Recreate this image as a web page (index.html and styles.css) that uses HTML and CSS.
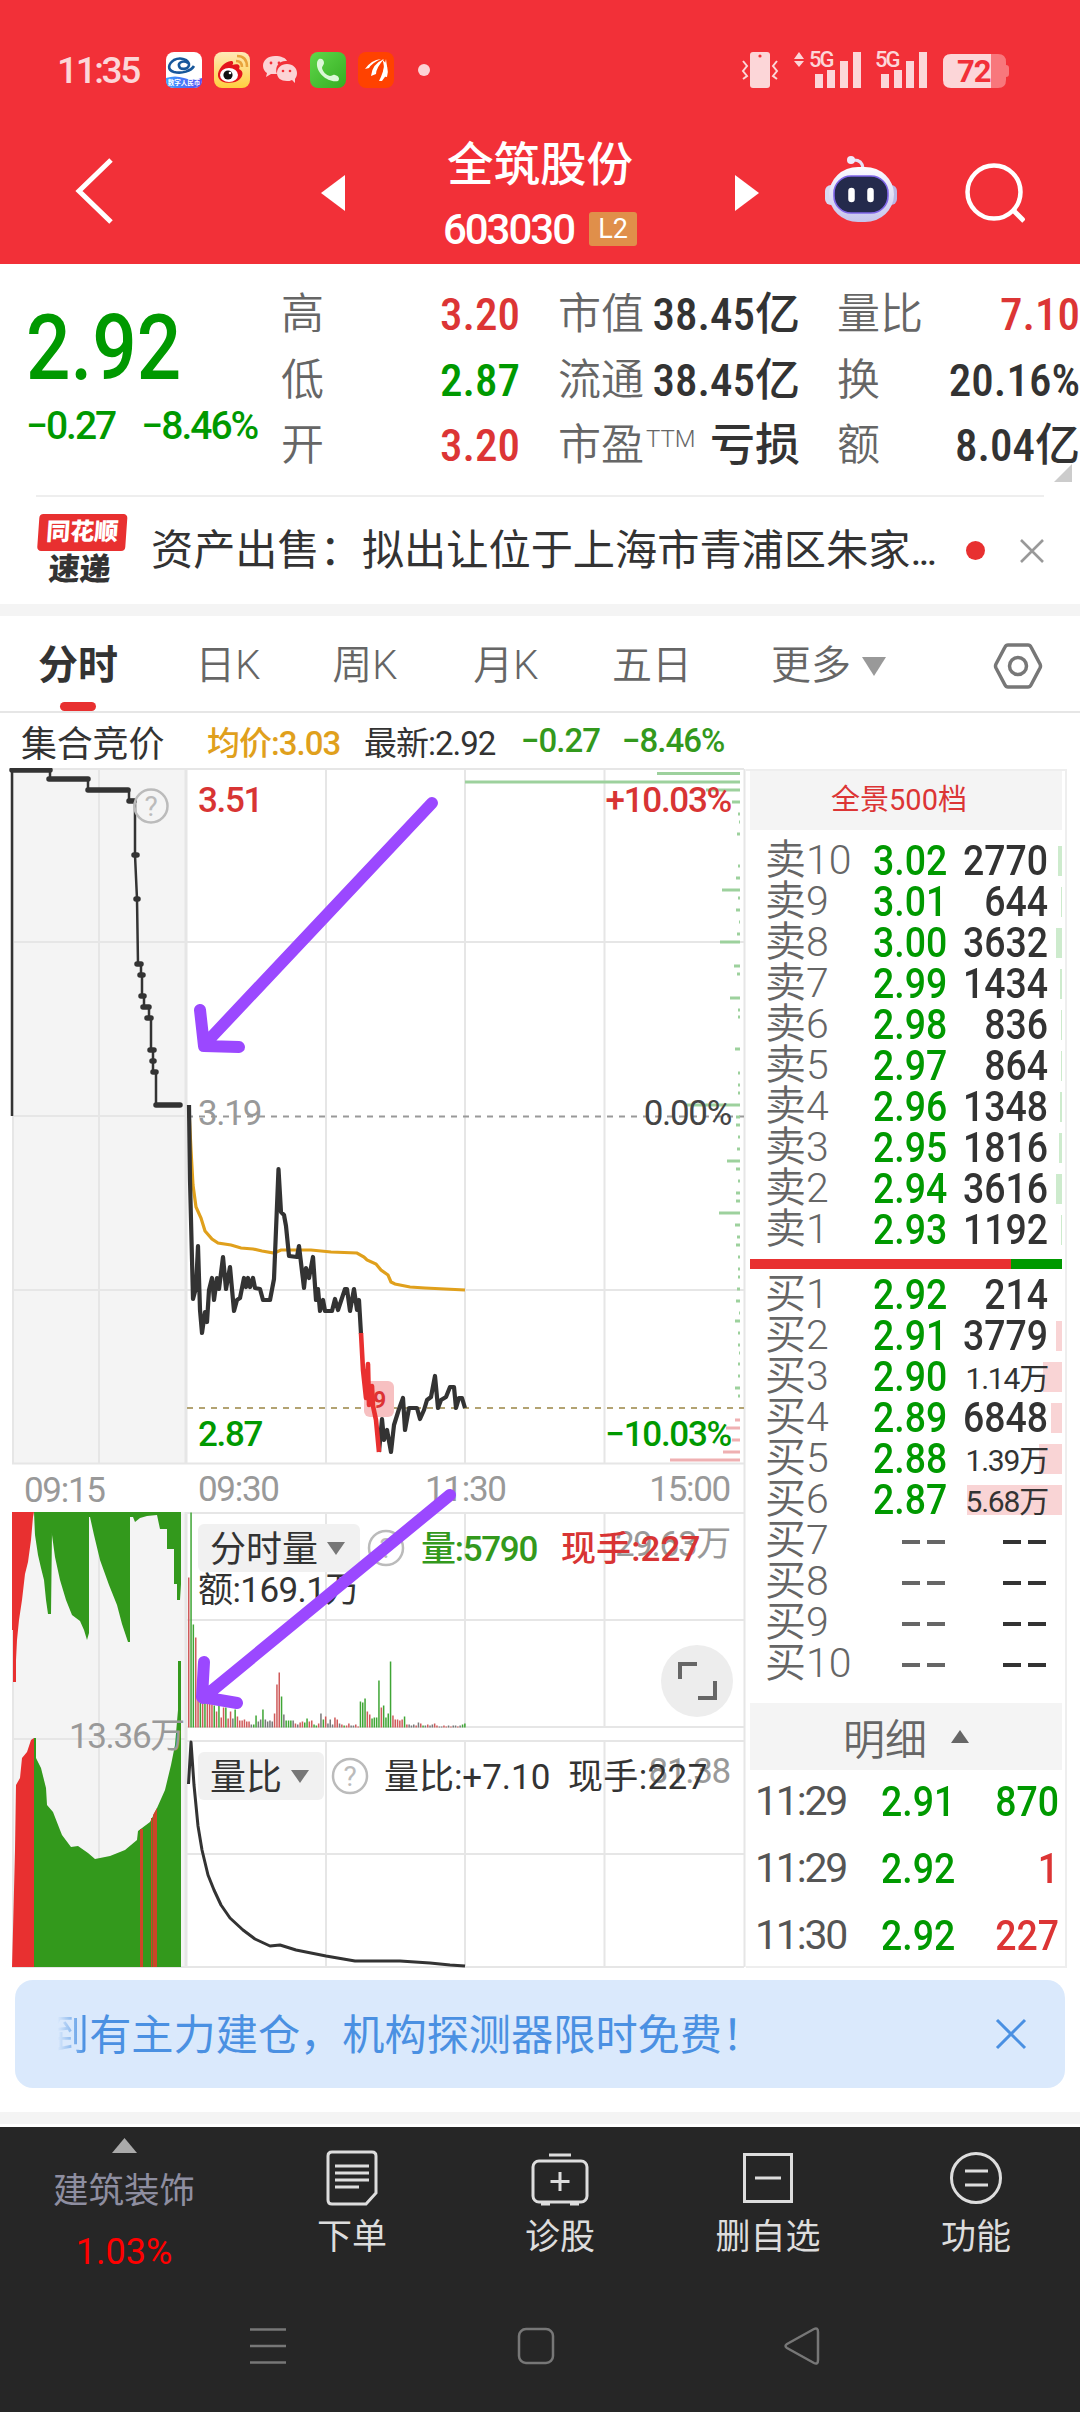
FILE: index.html
```html
<!DOCTYPE html>
<html lang="zh-CN">
<head>
  <meta charset="UTF-8" />
  <meta name="viewport" content="width=device-width, initial-scale=1.0"/>
  <title>全筑股份 603030</title>
  <link rel="stylesheet" href="styles.css">
</head>
<body>

  <header>
    <div class="status-bar">
      <span class="clock">11:35</span>
      <svg class="app-icons" width="266" height="38" viewBox="164 53 266 38">
        <defs>
          <linearGradient id="sea" x1="0" x2="1"><stop offset="0" stop-color="#3aa0ff"/><stop offset="1" stop-color="#5a4df0"/></linearGradient>
          <linearGradient id="sun" x1="0" y1="0" x2="0" y2="1"><stop offset="0" stop-color="#ffe9b8"/><stop offset="1" stop-color="#ffcf3f"/></linearGradient>
          <linearGradient id="leaf" x1="0" y1="0" x2="1" y2="1"><stop offset="0" stop-color="#5fd64a"/><stop offset="1" stop-color="#35ad22"/></linearGradient>
        </defs>
        <rect x="166" y="53" width="36" height="36" rx="8" fill="#fff"/>
        <path d="M166 79q9-3 18 0t18 0v2q0 8-8 8h-20q-8 0-8-8z" fill="url(#sea)"/>
        <path d="M188 64c-4-3-10-1-9 3 1 4 9 4 10-1 0-6-9-8-15-5-6 4-7 10 0 12 8 2 17-1 20-6" fill="none" stroke="#17579b" stroke-width="2.6"/>
        <text x="184" y="86" text-anchor="middle" class="bank">数字人民币</text>
        <rect x="214" y="53" width="36" height="36" rx="8" fill="url(#sun)"/>
        <path d="M218 77c-1-7 8-16 14-15 2 1 1 4 0 4 6-2 9 0 7 4 5 2 4 7 1 10-6 6-21 5-22-3z" fill="#e4141c"/>
        <ellipse cx="229" cy="76" rx="9" ry="7" fill="#fff"/>
        <circle cx="228" cy="76" r="4.6" fill="#111"/><circle cx="230" cy="74" r="1.3" fill="#fff"/>
        <path d="M236 62q6 0 6 6M237 57q10 0 10 11" fill="none" stroke="#e8a33c" stroke-width="2.5"/>
        <g fill="#fcd3d5">
          <path d="M275 57c-7 0-12 4-12 10 0 3 2 6 4 7l-1 4 5-3h6c-3-8 3-14 10-13-1-3-6-5-12-5z"/>
          <path d="M287 65c-6 0-10 4-10 9s4 8 10 8c2 0 3 0 5-1l3 3v-4c1-2 2-3 2-6 0-5-4-9-10-9z"/>
        </g>
        <g fill="#f23038"><circle cx="271" cy="64" r="1.4"/><circle cx="279" cy="64" r="1.4"/><circle cx="283" cy="72" r="1.3"/><circle cx="290" cy="72" r="1.3"/></g>
        <rect x="310" y="53" width="36" height="36" rx="8" fill="url(#leaf)"/>
        <path d="M319 60c3-1 5 1 5 4 0 2-2 3-2 5 1 4 4 7 8 8 2 0 3-2 5-1 4 1 5 4 3 6-10 2-22-8-21-18 0-2 1-3 2-4z" fill="#dcf7d8"/>
        <rect x="358" y="53" width="36" height="36" rx="8" fill="#ff4200"/>
        <g fill="#fff"><path d="M365 70q6-9 16-10-9 4-12 9zM371 77q1-12 13-17-8 9-8 15zM379 82q4-7 7-22 3 15-4 22z"/><path d="M382 60q8 7 5 18-4 0-4-4 2-8-1-14z"/></g>
        <circle cx="424" cy="71" r="6" fill="#fcd3d5"/>
      </svg>
      <svg class="phone-icons" width="270" height="62" viewBox="740 40 270 62">
        <g fill="#fcd6d8">
          <path d="M753 52h14q3 0 3 3v30q0 3-3 3h-14q-3 0-3-3v-30q0-3 3-3z"/>
          <path d="M794 59l5-7 5 7zM794 61l5 6 5-6z"/>
          <path d="M815 74h8v14h-8zM827 70h8v18h-8zM840 61h8v27h-8zM853 52h8v36h-8z"/>
          <path d="M881 74h8v14h-8zM894 70h8v18h-8zM906 61h8v27h-8zM919 52h8v36h-8z"/>
          <path d="M951 54h40v34h-40q-8 0-8-8v-18q0-8 8-8z"/>
          <text x="809" y="67" class="net">5G</text>
          <text x="875" y="67" class="net">5G</text>
        </g>
        <path d="M991 54h7q8 0 8 8v3q3 0 3 3v6q0 3-3 3v3q0 8-8 8h-7z" fill="#f8777c"/>
        <circle cx="760" cy="56" r="1.6" fill="#f23038"/>
        <path d="M743 61l4 5-4 5 4 5-4 3M777 61l-4 5 4 5-4 5 4 3" fill="none" stroke="#fcd6d8" stroke-width="2"/>
        <text x="957" y="82" class="battery">72</text>
      </svg>
    </div>

    <div class="title-bar">
      <svg class="back" width="40" height="68" viewBox="0 0 40 68"><path d="M36 3L4 34l32 31" fill="none" stroke="#fff" stroke-width="5"/></svg>
      <svg class="prev" width="24" height="36" viewBox="0 0 24 36"><path d="M24 0v36L0 18z" fill="#fff"/></svg>
      <div class="stock">
        <div class="stock-name">全筑股份</div>
        <div class="stock-code">603030<span class="badge-l2">L2</span></div>
      </div>
      <svg class="next" width="24" height="36" viewBox="0 0 24 36"><path d="M0 0v36l24-18z" fill="#fff"/></svg>
      <svg class="robot" width="74" height="70" viewBox="824 153 74 70">
        <defs>
          <linearGradient id="shell" x1="0" y1="0" x2="0" y2="1"><stop offset="0" stop-color="#fdfcff"/><stop offset="1" stop-color="#c5c4ec"/></linearGradient>
        </defs>
        <path d="M863 167q-1-9-11-8" fill="none" stroke="#e6e2f6" stroke-width="3"/>
        <circle cx="851" cy="159" r="4" fill="#efeafb"/>
        <rect x="825" y="184" width="12" height="20" rx="6" fill="#d9d9f2"/>
        <rect x="885" y="184" width="12" height="20" rx="6" fill="#b9b6e4"/>
        <rect x="829" y="166" width="65" height="55" rx="29" fill="url(#shell)"/>
        <rect x="834" y="175" width="54" height="37" rx="17" fill="#242a4c" stroke="#7f66e8" stroke-width="1.6"/>
        <path d="M851.500 190v8M870.500 190v8" stroke="#fff" stroke-width="6.5" stroke-linecap="round"/>
      </svg>
      <svg class="search" width="60" height="60" viewBox="965 161 60 60"><circle cx="994" cy="190" r="26.5" fill="none" stroke="#fff" stroke-width="4.5"/><path d="M1013 208l11 11" stroke="#fff" stroke-width="5"/></svg>
    </div>
  </header>

  <section class="quote">
    <div class="last">
      <div class="last-price">2.92</div>
      <div class="last-change"><span>−0.27</span><span>−8.46%</span></div>
    </div>
    <dl class="q1">
      <dt>高</dt><dd class="red">3.20</dd>
      <dt>低</dt><dd class="green">2.87</dd>
      <dt>开</dt><dd class="red">3.20</dd>
    </dl>
    <dl class="q2">
      <dt>市值</dt><dd>38.45亿</dd>
      <dt>流通</dt><dd>38.45亿</dd>
      <dt>市盈<sup>TTM</sup></dt><dd>亏损</dd>
    </dl>
    <dl class="q3">
      <dt>量比</dt><dd class="red">7.10</dd>
      <dt>换</dt><dd>20.16%</dd>
      <dt>额</dt><dd>8.04亿</dd>
    </dl>
    <span class="corner"></span>
  </section>

  <section class="news">
    <div class="news-logo"><b>同花顺</b><i>速递</i></div>
    <p>资产出售：拟出让位于上海市青浦区朱家<span>...</span></p>
    <span class="dot"></span>
    <svg width="26" height="26" viewBox="0 0 26 26"><path d="M2 2l22 22M24 2L2 24" stroke="#999" stroke-width="2.6"/></svg>
  </section>

  <nav class="tabs">
    <span class="tab active">分时</span>
    <span class="tab">日K</span>
    <span class="tab">周K</span>
    <span class="tab">月K</span>
    <span class="tab">五日</span>
    <span class="tab more">更多<svg width="24" height="19" viewBox="0 0 24 19"><path d="M0 0h24L12 19z" fill="#999"/></svg></span>
    <svg class="setting" width="52" height="52" viewBox="0 0 52 52" fill="none" stroke="#777" stroke-width="3.5"><path d="M16 5h20q2 0 3 2l9 17q1 2 0 4l-9 17q-1 2-3 2h-20q-2 0-3-2l-9-17q-1-2 0-4l9-17q1-2 3-2z"/><circle cx="26" cy="26" r="8.500"/></svg>
  </nav>

  <div class="info">
    <span class="auction">集合竞价</span>
    <span class="avg">均价:3.03</span>
    <span class="latest">最新:2.92</span>
    <span class="chg">−0.27</span>
    <span class="pct">−8.46%</span>
  </div>

  <main>
    <svg class="chart" width="746" height="1200" viewBox="0 768 746 1200">
      <!-- call auction background -->
      <rect x="12" y="769" width="174" height="694" fill="#f4f4f4"/>
      <rect x="12" y="1512" width="174" height="455" fill="#f4f4f4"/>

      <!-- grid -->
      <g stroke="#e6e6e6" stroke-width="2" fill="none">
        <path d="M12 769H744M12 942H744M12 1116H186M12 1290H744M12 1463.500H744"/>
        <path d="M13 769V1463M99 769V1463M326 769V1463M465 769V1463M604.500 769V1463M744.500 769V1967"/>
        <path d="M186 1513H744M186 1620H744M186 1727H744M186 1741H744M186 1854H744M12 1967H744M12 1739H186"/>
        <path d="M13 1512V1967M99 1512V1967M326 1512V1727M465 1512V1727M604.500 1512V1727M326 1741V1967M465 1741V1967M604.500 1741V1967"/>
        <path d="M186 769V1463M186 1512V1967" stroke-width="3"/>
      </g>
      <path d="M187 1116.500H744" stroke="#999" stroke-width="2" stroke-dasharray="6 6"/>
      <path d="M187 1408H744" stroke="#b3a372" stroke-width="2" stroke-dasharray="6 6"/>

      <g id="depth"></g>

      <!-- axis labels -->
      <g class="label">
        <text x="198" y="812" class="t-red">3.51</text>
        <text x="198" y="1125" class="t-gray">3.19</text>
        <text x="198" y="1446" class="t-green">2.87</text>
        <g text-anchor="end">
          <text x="731" y="812" class="t-red">+10.03%</text>
          <text x="731" y="1125" class="t-dark">0.00%</text>
          <text x="731" y="1446" class="t-green">−10.03%</text>
        </g>
        <g class="t-gray">
          <text x="24" y="1502">09:15</text>
          <text x="198" y="1501">09:30</text>
          <text x="425" y="1501">11:30</text>
          <text x="730" y="1501" text-anchor="end">15:00</text>
        </g>
      </g>

      <!-- auction price -->
      <path d="M12 1116V770M37 770H50V779H88V790H129V800H135V855L137 899L138 964H141V975H142V996H144V1007H149V1018H151V1050H153V1072H156V1105" fill="none" stroke="#333" stroke-width="2.500"/>
      <path d="M12 770H50M49 779H88M88 790H128M129 801H134M134 855H137M136 899H138M137 964H141M140 975H143M141 996H144M143 1007H149M147 1018H151M150 1050H154M152 1061H154M153 1072H156M156 1105H180" fill="none" stroke="#333" stroke-width="5.500" stroke-linecap="round"/>
      <g class="help"><circle cx="151" cy="806" r="16.500"/><text x="151" y="816">?</text></g>

      <!-- average and price -->
      <polyline fill="none" stroke="#e0a01c" stroke-width="3.200" points="189,1110 191,1150 193,1185 196,1207 201,1218 205,1231 212,1239 218,1243 231,1245 241,1248 253,1249 262,1251 274,1253 281,1250 311,1250 331,1252 357,1253 364,1257 367,1260 376,1264 381,1270 388,1275 391,1282 395,1284 410,1287 425,1288 445,1289 465,1290"/>
      <polyline fill="none" stroke="#333" stroke-width="4.200" stroke-linejoin="round" points="189,1105 190,1180 191,1220 193,1299 196,1288 198,1246 200,1310 202,1333 205,1312 207,1322 209,1290 212,1278 214,1300 217,1278 219,1289 223,1257 226,1289 230,1267 234,1311 237,1300 240,1298 244,1278 246,1287 248,1278 250,1287 253,1278 255,1288 260,1289 263,1300 270,1300 274,1279 276,1230 278.500,1169 281,1212 284,1215 286,1226 289,1256 297,1257 299,1246 304,1288 306,1268 309,1278 313,1257 316,1300 318,1289 320,1311 323,1300 325,1311 332,1311 335,1299 338,1310 345,1289 347,1289 350,1311 354,1289 357,1310 359,1300 361,1334"/>
      <polyline fill="none" stroke="#333" stroke-width="4.200" stroke-linejoin="round" points="379,1452 382,1419 384,1440 387,1430 391,1452 394,1425 399,1409 403,1398 405,1430 409,1408 417,1408 420,1419 424,1410 427,1400 431,1397 435,1376 438,1408 441,1400 446,1397 450,1387 454,1387 456,1408 459,1398 462,1398 465,1408"/>
      <rect x="364" y="1381" width="30" height="36" rx="6" fill="#f7c0c1"/>
      <text x="373" y="1408" class="nine">9</text>
      <polyline fill="none" stroke="#e93030" stroke-width="4.600" stroke-linejoin="round" points="361,1333 363,1370 366,1398 368,1364 369,1405 372,1386 373,1406 376,1420 379,1452"/>

      <!-- auction volume -->
      <path d="M12 1512H34L33 1517L31 1540L28 1562L25 1574L22 1600L19 1620L17 1640L16 1660V1682H13V1630H12z" fill="#e83030"/>
      <path d="M34 1512H181V1584L180 1600H177V1584H174V1549H167V1529H160L157 1515L147 1516L140 1518L135 1522L133 1517H130V1642H128L122 1624L117 1605L109 1585L100 1560L94 1535L90 1517H89V1633L87 1640L84 1630L80 1621L72 1615L66 1600L60 1580L55 1557L52 1535V1531L51 1614H48L46 1600L44 1580L41 1568L38 1555L35 1535z" fill="#33991c"/>
      <path d="M12 1967L13 1930L15 1850L16 1785L20 1778L22 1758L27 1752L31 1740L34 1738V1967z" fill="#e83030"/>
      <path d="M34 1738H36V1758L41 1768L46 1788L47 1805L53 1812L60 1830L62 1835L71 1847L78 1846L88 1853L95 1859L110 1856L125 1850L137 1840L138 1831L150 1822L157 1808L165 1790L171 1765L175 1745L178 1710V1661H181V1967H34z" fill="#33991c"/>
      <path d="M140 1829h3v138h-3zM151 1818h1.500v149h-1.500zM153 1815l4-7v159h-4z" fill="#cc4528"/>
      <g class="label"><text x="184" y="1748" text-anchor="end" class="t-gray">13.36万</text></g>

      <g id="volume"></g>

      <!-- volume ratio -->
      <polyline fill="none" stroke="#333" stroke-width="3" stroke-linejoin="round" points="188.500,1784 191,1742 194,1785 198,1826 202,1850 208,1875 214,1890 221,1905 230,1918 243,1930 255,1939 270,1946 280,1945 296,1950 326,1956 355,1961 400,1961 430,1963 450,1965 465,1966"/>

      <!-- indicator rows -->
      <g class="label">
        <text x="730" y="1556" text-anchor="end" class="t-gray">29.63万</text>
        <text x="730" y="1783" text-anchor="end" class="t-gray">81.38</text>
        <rect x="198" y="1524" width="162" height="48" rx="6" fill="#f1f1f1"/>
        <text x="210" y="1562" class="t-ink cjk">分时量</text>
        <path d="M327 1542h18l-9 13z" fill="#777"/>
        <text x="421" y="1561" class="t-leaf">量:5790</text>
        <text x="561" y="1561" class="t-red" textLength="138">现手:227</text>
        <text x="198" y="1602" class="t-ink" textLength="161">额:169.1万</text>
        <rect x="198" y="1752" width="126" height="48" rx="6" fill="#f1f1f1"/>
        <text x="210" y="1790" class="t-ink cjk">量比</text>
        <path d="M291 1770h18l-9 13z" fill="#777"/>
        <text x="384" y="1789" class="t-ink" textLength="165">量比:+7.10</text>
        <text x="568" y="1789" class="t-ink" textLength="138">现手:227</text>
      </g>
      <g class="help">
        <circle cx="386" cy="1548" r="17"/><text x="386" y="1558">?</text>
        <circle cx="350" cy="1776" r="17"/><text x="350" y="1786">?</text>
      </g>

      <circle cx="697" cy="1681" r="36" fill="#ededed"/>
      <path d="M680 1679v-15h17M698 1698h17v-17" fill="none" stroke="#666" stroke-width="4"/>

      <!-- hand drawn arrows -->
      <g fill="none" stroke="#9b48ff" stroke-width="12" stroke-linecap="round" stroke-linejoin="round">
        <path d="M432 803L204 1045M200 1010L204 1046L239 1047" />
        <path d="M450 1495L203 1698M204 1662L202 1697L237 1703" />
      </g>
    </svg>

    <aside class="book">
      <div class="book-head">全景500档</div>
      <ul id="sell"></ul>
      <div class="strength"><i></i></div>
      <ul id="buy"></ul>
      <div class="detail-head">明细<svg width="18" height="13" viewBox="0 0 18 13"><path d="M0 13h18L9 0z" fill="#666"/></svg></div>
      <ul class="ticks">
        <li><span>11:29</span><b class="green">2.91</b><em class="green">870</em></li>
        <li><span>11:29</span><b class="green">2.92</b><em class="red">1</em></li>
        <li><span>11:30</span><b class="green">2.92</b><em class="red">227</em></li>
      </ul>
    </aside>
  </main>

  <div class="banner">
    <p><span>到</span>有主力建仓，机构探测器限时免费！</p>
    <svg width="32" height="32" viewBox="0 0 32 32"><path d="M2 2l28 28M30 2L2 30" stroke="#4a90e2" stroke-width="3"/></svg>
  </div>

  <footer>
    <div class="menu">
      <div class="index">
        <svg width="25" height="15" viewBox="0 0 25 15"><path d="M0 15h25L12.500 0z" fill="#aaa"/></svg>
        <span>建筑装饰</span>
        <b>1.03%</b>
      </div>
      <div class="item">
        <svg width="58" height="58" viewBox="0 0 58 58"><path d="M9 3h40q4 0 4 4v37l-10 11H9q-4 0-4-4V7q0-4 4-4z"/><path d="M12 17h34M12 24h34M12 31h34M12 38h24"/></svg>
        下单
      </div>
      <div class="item">
        <svg width="58" height="58" viewBox="0 0 58 58"><rect x="2" y="12" width="54" height="41" rx="6"/><path d="M18 6h22M29 23v19M19.500 32.500h19M10 55h9M39 55h9"/></svg>
        诊股
      </div>
      <div class="item">
        <svg width="58" height="58" viewBox="0 0 58 58"><rect x="5.500" y="5.500" width="47" height="47"/><path d="M16 29h26"/></svg>
        删自选
      </div>
      <div class="item">
        <svg width="58" height="58" viewBox="0 0 58 58"><circle cx="29" cy="29" r="24.500"/><path d="M18 22h23M18 36h23"/></svg>
        功能
      </div>
    </div>
    <svg class="sysnav" width="1080" height="48" viewBox="0 2322 1080 48" fill="none" stroke="#777" stroke-width="2.500">
      <path d="M250 2329.500h36M250 2346h36M250 2362.500h36"/>
      <rect x="519" y="2329" width="34" height="34" rx="7"/>
      <path d="M787 2344l27-15q4-2 4 3v28q0 5-4 3l-27-15q-3-2 0-4z"/>
    </svg>
  </footer>

  <script>
    // order book: [label, price, volume, bar width]
    const sellRows = [
      ["卖10", "3.02", "2770", 4], ["卖9", "3.01", "644", 1], ["卖8", "3.00", "3632", 6],
      ["卖7", "2.99", "1434", 2], ["卖6", "2.98", "836", 1], ["卖5", "2.97", "864", 1],
      ["卖4", "2.96", "1348", 2], ["卖3", "2.95", "1816", 3], ["卖2", "2.94", "3616", 6],
      ["卖1", "2.93", "1192", 1]
    ];
    const buyRows = [
      ["买1", "2.92", "214", 0], ["买2", "2.91", "3779", 6], ["买3", "2.90", "1.14万", 19],
      ["买4", "2.89", "6848", 11], ["买5", "2.88", "1.39万", 23], ["买6", "2.87", "5.68万", 95],
      ["买7", "--", "--", 0], ["买8", "--", "--", 0], ["买9", "--", "--", 0], ["买10", "--", "--", 0]
    ];

    function fillBook(id, rows) {
      document.getElementById(id).innerHTML = rows.map(([name, price, vol, bar]) => {
        const empty = price === "--";
        const small = vol.includes("万") ? " small" : "";
        return `<li${empty ? ' class="empty"' : ""}><i style="width:${bar}px"></i><span>${name}</span>` +
          `<b>${empty ? "<s></s><s></s>" : price}</b><em class="vol${small}">${empty ? "<s></s><s></s>" : vol}</em></li>`;
      }).join("");
    }
    fillBook("sell", sellRows);
    fillBook("buy", buyRows);

    // minute volume, one bar per minute: r = up, g = down, k = flat
    const heights = [150, 215, 103, 90, 28, 26, 25, 25, 24, 24, 23, 22, 16, 22, 10, 20, 20, 9, 16, 9, 18, 11, 7, 7, 8, 6, 6, 3, 3, 12,
      6, 8, 18, 8, 6, 7, 6, 14, 43, 55, 31, 13, 7, 7, 7, 7, 4, 3, 5, 6, 5, 9, 6, 7, 3, 2, 4, 14, 8, 11,
      4, 8, 3, 10, 8, 4, 3, 2, 2, 4, 2, 2, 3, 1, 26, 25, 29, 16, 13, 9, 10, 10, 47, 20, 22, 10, 14, 66, 12,
      8, 8, 7, 8, 11, 3, 3, 2, 3, 2, 5, 4, 2, 2, 3, 2, 3, 4, 2, 1, 1, 2, 1, 2, 1, 2, 2, 1, 2, 3, 4];
    const sides = "rggrrgrgrrrgrgrrgrrkgrrrrrrkggkkgkkkkrrrgkgggkrkrrggrrggrkgrkkkrrkrgrrkkrr" +
      "gggrrggggrggggrrrrrgrkkkrkrgkrkkrrkkrrkrkkrkgg";
    const colors = { r: "#cf5a5a", g: "#3fa535", k: "#777" };
    document.getElementById("volume").innerHTML = heights.map((h, i) =>
      `<rect x="${(188 + i * 2.32).toFixed(1)}" y="${1727.5 - h}" width="1.5" height="${h}" fill="${colors[sides[i]]}"/>`
    ).join("");

    // depth bars on the right edge: [y, length]
    const asks = [[773.5, 83], [782, 275], [790, 34], [802, 8], [814, 2], [822, 1], [834, 3], [866, 2], [878, 4], [890, 18],
      [898, 2], [910, 4], [922, 1], [934, 3], [942, 20], [966, 6], [974, 3], [998, 10], [1010, 2], [1017, 2],
      [1049, 5], [1073, 2], [1085, 2], [1093, 2], [1105, 55], [1117, 4], [1125, 4], [1137, 2], [1149, 3], [1161, 13],
      [1169, 4], [1181, 2], [1193, 4], [1201, 4], [1213, 21], [1225, 5], [1237, 3], [1245, 4], [1257, 2], [1269, 2],
      [1277, 2], [1289, 3], [1301, 4], [1313, 1], [1321, 5], [1333, 2], [1345, 2], [1353, 1], [1364, 2], [1376, 2],
      [1388, 5], [1396, 2]];
    const bids = [[1420, 5], [1428, 14], [1440, 8], [1452, 17], [1460, 70]];
    const bar = color => ([y, w]) => `<rect x="${740 - w}" y="${y - 1.5}" width="${w}" height="3" fill="${color}"/>`;
    document.getElementById("depth").innerHTML = asks.map(bar("#9dd19d")).join("") + bids.map(bar("#efb0b2")).join("");
  </script>

</body>
</html>
```
FILE: styles.css
```css
* {
  box-sizing: border-box;
}

body {
  margin: 0;
  width: 1080px;
  height: 2412px;
  overflow: hidden;
  background: #fff;
  color: #333;
  font-family: Roboto, "Noto Sans CJK SC", sans-serif;
}

ul, dl, dd, p {
  margin: 0;
  padding: 0;
  list-style: none;
}

i, em {
  font-style: normal;
}

svg {
  display: block;
  flex: none;
}

.red { color: #dc3535 !important; }
.green { color: #009900 !important; }

/* header */
header {
  height: 264px;
  background: #f23038;
  color: #fff;
}

.status-bar {
  height: 122px;
  padding: 19px 70px 0 57px;
  display: flex;
  align-items: center;
}

.clock {
  width: 107px;
  font-size: 37px;
  letter-spacing: -2.4px;
  font-weight: 500;
  color: #fcd6d8;
}

.phone-icons {
  margin-left: auto;
}

.bank {
  font-size: 6.500px;
  font-weight: 700;
  fill: #fff;
}

.net {
  font-size: 22px;
  font-weight: 500;
  letter-spacing: -2px;
}

.battery {
  font-size: 31px;
  font-weight: 700;
  letter-spacing: -1px;
  fill: #f23038;
}

.title-bar {
  height: 142px;
  display: flex;
  align-items: center;
  padding-left: 75px;
}

.back { margin-top: -4px; }
.prev { margin-left: 206px; }

.stock {
  width: 390px;
  height: 142px;
  padding-top: 14px;
  text-align: center;
}

.stock-name {
  height: 58px;
  line-height: 58px;
  font-size: 46.500px;
  font-weight: 500;
}

.stock-code {
  height: 64px;
  display: flex;
  align-items: center;
  justify-content: center;
  padding-top: 6px;
  font-size: 42px;
  font-weight: 500;
  letter-spacing: -2px;
}

.badge-l2 {
  width: 48px;
  height: 34px;
  margin-left: 15px;
  line-height: 35px;
  border-radius: 3px;
  background: #e08f4a;
  font-size: 27px;
  font-weight: 400;
  letter-spacing: 0;
}

.robot { margin: 0 0 8px 65px; }
.search { margin-left: 67px; }

/* quote */
.quote {
  position: relative;
  height: 233px;
  display: flex;
  padding-top: 18px;
}

.quote::after {
  content: "";
  position: absolute;
  left: 36px;
  right: 36px;
  bottom: 0;
  height: 2px;
  background: #eee;
}

.last {
  width: 281px;
  padding-left: 26px;
  color: #009900;
}

.last-price {
  height: 102px;
  line-height: 134px;
  font-size: 90px;
  font-weight: 500;
  transform: scaleX(.87);
  transform-origin: left;
}

.last-change {
  display: flex;
  gap: 26px;
  line-height: 84px;
  font-size: 39px;
  font-weight: 500;
  letter-spacing: -2px;
}

dl {
  display: grid;
  grid-template-columns: 90px 1fr;
  grid-auto-rows: 65.5px;
  line-height: 65.5px;
  font-size: 43px;
}

dt {
  color: #666;
  white-space: nowrap;
  font-weight: 350;
}

dd {
  text-align: right;
  font-size: 45px;
  font-weight: 500;
  font-stretch: 87%;
  white-space: nowrap;
}

.q1 { width: 239px; }
.q2 { width: 242px; margin-left: 38px; }
.q3 { width: 243px; margin-left: 37px; }

sup {
  font-size: 24px;
  line-height: 0;
  margin-left: 2px;
  vertical-align: 13px;
}

.corner {
  position: absolute;
  right: 8px;
  top: 200px;
  border-left: 18px solid transparent;
  border-bottom: 18px solid #ccc;
}

/* news */
.news {
  height: 119px;
  display: flex;
  align-items: center;
  padding: 0 35px 0 37px;
  border-bottom: 12px solid #f4f4f4;
}

.news p {
  width: 786px;
  font-size: 42.2px;
  line-height: 60px;
  white-space: nowrap;
}

.news p span {
  letter-spacing: -3px;
}

.news-logo {
  width: 88px;
  margin-right: 26px;
  text-align: center;
  transform: skewX(-4deg);
}

.news-logo b {
  display: block;
  height: 37px;
  line-height: 36px;
  border-radius: 4px;
  background: #e83030;
  color: #fff;
  font-size: 24px;
  font-weight: 900;
}

.news-logo i {
  display: block;
  line-height: 36px;
  margin-top: 1px;
  font-size: 31px;
  font-weight: 900;
}

.dot {
  width: 19px;
  height: 19px;
  margin: 0 34px 0 29px;
  border-radius: 50%;
  background: #e83030;
}

/* tabs */
.tabs {
  position: relative;
  height: 97px;
  display: flex;
  align-items: center;
  padding-top: 5px;
  border-bottom: 2px solid #e6e6e6;
  font-size: 40px;
  color: #666;
  line-height: 60px;
}

.tab {
  position: relative;
  width: 142px;
  text-align: center;
  font-weight: 350;
}

.tab:first-child { margin-left: 7px; width: 142px; }
.tab:nth-child(2) { width: 158px; }
.tab:nth-child(3) { width: 116px; }
.tab:nth-child(4) { width: 166px; }
.tab:nth-child(5) { width: 126px; }

.tab.active {
  color: #333;
  font-weight: 700;
}

.tab.active::after {
  content: "";
  position: absolute;
  left: 53px;
  bottom: -15px;
  width: 36px;
  height: 9px;
  border-radius: 5px;
  background: #e83030;
}

.more {
  display: flex;
  align-items: center;
  gap: 11px;
  margin-left: 56px;
  width: 140px;
}

.setting {
  margin-left: 81px;
}

/* info row */
.info {
  height: 55px;
  display: flex;
  align-items: center;
  padding-left: 21px;
  font-size: 33px;
  font-weight: 500;
  letter-spacing: -1px;
  white-space: nowrap;
}

.auction { width: 186px; font-size: 36px; font-weight: 400; letter-spacing: -.2px; }
.avg { width: 157px; color: #e0a01c; }
.latest { width: 157px; font-weight: 400; }
.chg { width: 101px; color: #33991c; }
.pct { color: #33991c; }

/* charts */
main {
  display: flex;
  height: 1200px;
}

.label {
  font-size: 35px;
  letter-spacing: -1.3px;
}

.cjk {
  font-size: 36px;
  letter-spacing: 0;
}

.t-red { fill: #d83434; font-weight: 500; }
.t-green { fill: #009900; font-weight: 500; }
.t-leaf { fill: #33991c; font-weight: 500; }
.t-gray { fill: #999; }
.t-dark { fill: #444; }
.t-ink { fill: #333; }

.nine {
  font-size: 23px;
  font-weight: 700;
  fill: #d33;
}

.help circle {
  fill: none;
  stroke: #bbb;
  stroke-width: 2.5;
}

.help text {
  fill: #bbb;
  font-size: 28px;
  text-anchor: middle;
}

/* order book */
.book {
  width: 321px;
  height: 1199px;
  margin-top: 1px;
  padding: 0 3px 0 4px;
  border: 2px solid #eee;
  border-left: 0;
}

.book-head {
  height: 59px;
  line-height: 59px;
  margin-bottom: 10px;
  padding-right: 14px;
  background: #f4f4f4;
  text-align: center;
  font-size: 29px;
  color: #dc3535;
}

.book li {
  position: relative;
  height: 41px;
  line-height: 41px;
  display: flex;
  align-items: center;
  padding: 0 14px 0 15px;
}

.book li i {
  position: absolute;
  right: 0;
  top: 6px;
  height: 30px;
  background: #cdebcd;
}

#buy li i { background: #f9d4d5; }

.book li span {
  position: relative;
  width: 108px;
  font-size: 41px;
  font-weight: 350;
  color: #666;
}

.book li b {
  position: relative;
  width: 72px;
  font-size: 43px;
  font-weight: 500;
  color: #009900;
  transform: scaleX(.87);
  transform-origin: left;
}

.book li em {
  position: relative;
  flex: 1;
  text-align: right;
  font-size: 43px;
  font-weight: 500;
  white-space: nowrap;
  transform: scaleX(.87);
  transform-origin: right;
}

.book li em.small {
  padding-top: 4px;
  font-size: 30px;
  font-weight: 400;
  letter-spacing: -1.2px;
  transform: none;
}

.book .empty b,
.book .empty em {
  display: flex;
  justify-content: flex-end;
  gap: 7px;
  transform: none;
}

.empty s {
  width: 18px;
  height: 4px;
  margin-top: 2px;
  background: #666;
}

.empty em s { background: #333; }
.book .empty em { padding-right: 2px; }

.strength {
  height: 10px;
  margin: 9px 0 5px;
  background: #009900;
}

.strength i {
  display: block;
  width: 261px;
  height: 10px;
  background: #e83030;
}

.detail-head {
  height: 67px;
  margin-top: 19px;
  display: flex;
  align-items: center;
  justify-content: center;
  gap: 24px;
  background: #f4f4f4;
  font-size: 42px;
  font-weight: 350;
  color: #666;
}

.book .ticks li {
  height: 67px;
  line-height: 60px;
  padding: 0 3px 6px 5px;
}

.book .ticks span {
  width: 126px;
  font-size: 41px;
  font-weight: 400;
  letter-spacing: -2.2px;
  color: #555;
}

/* banner */
.banner {
  height: 108px;
  margin: 12px 15px 0;
  padding: 0 38px 0 41px;
  display: flex;
  align-items: center;
  justify-content: space-between;
  border-radius: 18px;
  background: #dae9fc;
  color: #4a90e2;
  font-size: 42.2px;
  white-space: nowrap;
}

.banner p {
  margin-left: -9px;
  padding-top: 4px;
  line-height: 60px;
}

.banner span {
  background: linear-gradient(90deg, rgba(74, 144, 226, 0) 25%, #4a90e2 90%);
  -webkit-background-clip: text;
  background-clip: text;
  color: transparent;
}

/* bottom menu */
footer {
  height: 324px;
  margin-top: 24px;
  border-top: 12px solid #f4f4f4;
  background: linear-gradient(#fff 3px, #262626 3px);
}

.menu {
  display: flex;
  height: 198px;
  padding-top: 3px;
}

.index {
  width: 248px;
  display: flex;
  flex-direction: column;
  align-items: center;
  padding-top: 11px;
  font-size: 35.5px;
  color: #8e8ea0;
}

.index span {
  line-height: 60px;
  margin-top: 8px;
}

.index b {
  line-height: 62px;
  font-weight: 400;
  font-size: 36px;
  color: #f00;
}

.item {
  width: 208px;
  display: flex;
  flex-direction: column;
  align-items: center;
  padding-top: 22px;
  line-height: 61px;
  font-size: 35px;
  color: #ddd;
}

.item svg {
  fill: none;
  stroke: #ddd;
  stroke-width: 3;
}
```
